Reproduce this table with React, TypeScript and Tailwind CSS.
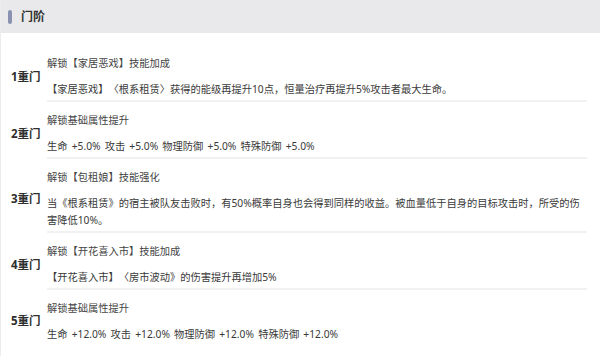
const rows = [
  {
    label: '1重门',
    title: '解锁【家居恶戏】技能加成',
    desc: '【家居恶戏】〈根系租赁〉获得的能级再提升10点，恒量治疗再提升5%攻击者最大生命。',
  },
  {
    label: '2重门',
    title: '解锁基础属性提升',
    desc: '生命 +5.0% 攻击 +5.0% 物理防御 +5.0% 特殊防御 +5.0%',
  },
  {
    label: '3重门',
    title: '解锁【包租娘】技能强化',
    desc: '当《根系租赁》的宿主被队友击败时，有50%概率自身也会得到同样的收益。被血量低于自身的目标攻击时，所受的伤害降低10%。',
  },
  {
    label: '4重门',
    title: '解锁【开花喜入市】技能加成',
    desc: '【开花喜入市】〈房市波动》的伤害提升再增加5%',
  },
  {
    label: '5重门',
    title: '解锁基础属性提升',
    desc: '生命 +12.0% 攻击 +12.0% 物理防御 +12.0% 特殊防御 +12.0%',
  },
];

export default function App() {
  return (
    <div
      className="w-[600px] h-[356px] overflow-hidden bg-white border-l border-[#ececec] text-[#3c3c3c] [text-spacing-trim:space-all]"
      style={{ fontFamily: '"Noto Sans", "Noto Sans CJK SC", sans-serif' }}
    >
      <div className="h-[33px] bg-[#e9e9eb] flex items-center pl-[7px] gap-[9px]">
        <span className="w-[4px] h-[14px] rounded-full bg-[#8a92b2]" />
        <span className="text-[12px] font-bold text-[#333]">门阶</span>
      </div>

      <div className="mt-[12px]">
        {rows.map((row, i) => (
          <div key={row.label} className="flex items-center">
            <div className="w-[46px] shrink-0 pl-[10px] pt-[6px] text-[11.5px] font-bold text-[#2e2e2e] leading-none">
              {row.label}
            </div>
            <div
              className={
                'flex-1 mr-[13px] pt-[10px] pb-[2px] text-[10.25px] [word-spacing:1.5px] ' +
                (i < rows.length - 1 ? 'border-b-2 border-[#f1f1f1]' : '')
              }
            >
              <div className="leading-[16px] text-[#444]">{row.title}</div>
              <div className="mt-[10px] leading-[17px] text-[#3a3a3a]">{row.desc}</div>
            </div>
          </div>
        ))}
      </div>
    </div>
  );
}
